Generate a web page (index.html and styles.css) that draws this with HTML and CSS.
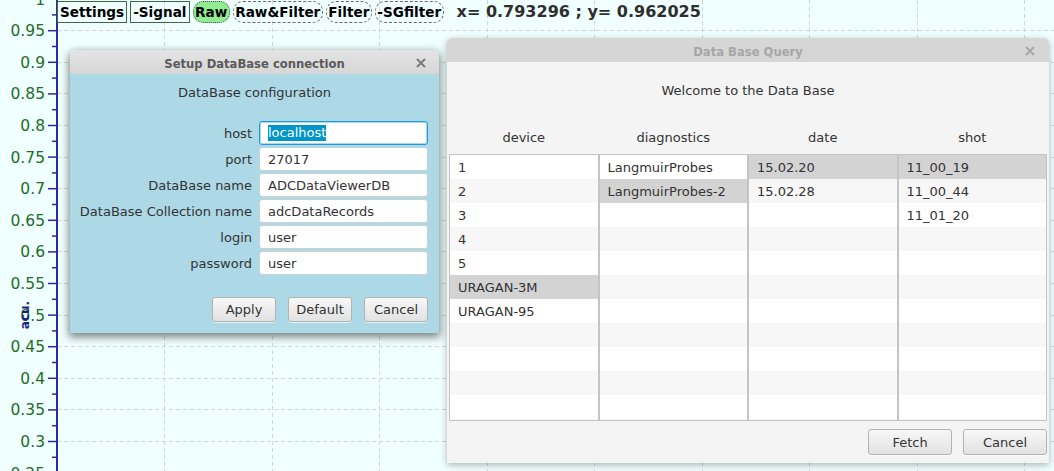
FILE: index.html
```html
<!DOCTYPE html>
<html>
<head>
<meta charset="utf-8">
<title>ADC Data Viewer</title>
<link rel="stylesheet" href="styles.css">
</head>
<body>
<svg class="chart" width="1054" height="471" viewBox="0 0 1054 471">
  <g class="grid">
    <line x1="57" y1="30.5" x2="1054" y2="30.5"/>
    <line x1="57" y1="62.5" x2="1054" y2="62.5"/>
    <line x1="57" y1="93.5" x2="1054" y2="93.5"/>
    <line x1="57" y1="125.5" x2="1054" y2="125.5"/>
    <line x1="57" y1="157.5" x2="1054" y2="157.5"/>
    <line x1="57" y1="188.5" x2="1054" y2="188.5"/>
    <line x1="57" y1="220.5" x2="1054" y2="220.5"/>
    <line x1="57" y1="251.5" x2="1054" y2="251.5"/>
    <line x1="57" y1="283.5" x2="1054" y2="283.5"/>
    <line x1="57" y1="315.5" x2="1054" y2="315.5"/>
    <line x1="57" y1="346.5" x2="1054" y2="346.5"/>
    <line x1="57" y1="378.5" x2="1054" y2="378.5"/>
    <line x1="57" y1="409.5" x2="1054" y2="409.5"/>
    <line x1="57" y1="441.5" x2="1054" y2="441.5"/>
    <line x1="164.5" y1="0" x2="164.5" y2="471"/>
    <line x1="272.5" y1="0" x2="272.5" y2="471"/>
    <line x1="379.5" y1="0" x2="379.5" y2="471"/>
    <line x1="487.5" y1="0" x2="487.5" y2="471"/>
    <line x1="594.5" y1="0" x2="594.5" y2="471"/>
    <line x1="702.5" y1="0" x2="702.5" y2="471"/>
    <line x1="809.5" y1="0" x2="809.5" y2="471"/>
    <line x1="917.5" y1="0" x2="917.5" y2="471"/>
    <line x1="1024.5" y1="0" x2="1024.5" y2="471"/>
  </g>
  <g class="ticks">
    <line x1="48" y1="-0.9" x2="57" y2="-0.9"/>
    <line x1="48" y1="30.7" x2="57" y2="30.7"/>
    <line x1="48" y1="62.3" x2="57" y2="62.3"/>
    <line x1="48" y1="93.9" x2="57" y2="93.9"/>
    <line x1="48" y1="125.5" x2="57" y2="125.5"/>
    <line x1="48" y1="157.1" x2="57" y2="157.1"/>
    <line x1="48" y1="188.7" x2="57" y2="188.7"/>
    <line x1="48" y1="220.3" x2="57" y2="220.3"/>
    <line x1="48" y1="251.9" x2="57" y2="251.9"/>
    <line x1="48" y1="283.5" x2="57" y2="283.5"/>
    <line x1="48" y1="315.1" x2="57" y2="315.1"/>
    <line x1="48" y1="346.7" x2="57" y2="346.7"/>
    <line x1="48" y1="378.3" x2="57" y2="378.3"/>
    <line x1="48" y1="409.9" x2="57" y2="409.9"/>
    <line x1="48" y1="441.5" x2="57" y2="441.5"/>
    <line x1="52" y1="14.9" x2="57" y2="14.9"/>
    <line x1="52" y1="46.5" x2="57" y2="46.5"/>
    <line x1="52" y1="78.1" x2="57" y2="78.1"/>
    <line x1="52" y1="109.7" x2="57" y2="109.7"/>
    <line x1="52" y1="141.3" x2="57" y2="141.3"/>
    <line x1="52" y1="172.9" x2="57" y2="172.9"/>
    <line x1="52" y1="204.5" x2="57" y2="204.5"/>
    <line x1="52" y1="236.1" x2="57" y2="236.1"/>
    <line x1="52" y1="267.7" x2="57" y2="267.7"/>
    <line x1="52" y1="299.3" x2="57" y2="299.3"/>
    <line x1="52" y1="330.9" x2="57" y2="330.9"/>
    <line x1="52" y1="362.5" x2="57" y2="362.5"/>
    <line x1="52" y1="394.1" x2="57" y2="394.1"/>
    <line x1="52" y1="425.7" x2="57" y2="425.7"/>
    <line x1="52" y1="457.3" x2="57" y2="457.3"/>
  </g>
  <line class="axis" x1="57" y1="0" x2="57" y2="471"/>
  <g class="labels">
    <text x="45" y="4.6">1</text>
    <text x="45" y="36.2">0.95</text>
    <text x="45" y="67.8">0.9</text>
    <text x="45" y="99.4">0.85</text>
    <text x="45" y="131">0.8</text>
    <text x="45" y="162.6">0.75</text>
    <text x="45" y="194.2">0.7</text>
    <text x="45" y="225.8">0.65</text>
    <text x="45" y="257.4">0.6</text>
    <text x="45" y="289">0.55</text>
    <text x="45" y="320.6">0.5</text>
    <text x="45" y="352.2">0.45</text>
    <text x="45" y="383.8">0.4</text>
    <text x="45" y="415.4">0.35</text>
    <text x="45" y="447">0.3</text>
    <text x="45" y="478.6">0.25</text>
  </g>
  <text class="axis-title" transform="translate(29 315) rotate(-90)">acu.</text>
</svg>

<div class="toolbar">
  <span class="tb tb-box">Settings</span>
  <span class="tb tb-box">-Signal</span>
  <span class="tb tb-pill tb-on">Raw</span>
  <span class="tb tb-pill">Raw&amp;Filter</span>
  <span class="tb tb-pill">Filter</span>
  <span class="tb tb-pill">-SGfilter</span>
  <span class="coords">x= 0.793296 ; y= 0.962025</span>
</div>

<div class="win win-setup">
  <div class="win-title title-active">Setup DataBase connection
    <svg class="win-close" width="10" height="10" viewBox="0 0 10 10"><path d="M1 1L9 9M9 1L1 9"/></svg>
  </div>
  <div class="setup-body">
    <div class="setup-heading">DataBase configuration</div>
    <div class="form">
      <span class="flabel">host</span><div class="field field-focus"><span class="sel">localhost</span></div>
      <span class="flabel">port</span><div class="field">27017</div>
      <span class="flabel">DataBase name</span><div class="field">ADCDataViewerDB</div>
      <span class="flabel">DataBase Collection name</span><div class="field">adcDataRecords</div>
      <span class="flabel">login</span><div class="field">user</div>
      <span class="flabel">password</span><div class="field">user</div>
    </div>
    <div class="btnrow">
      <button class="btn btn-small">Apply</button>
      <button class="btn btn-small">Default</button>
      <button class="btn btn-small">Cancel</button>
    </div>
  </div>
</div>

<div class="win win-query">
  <div class="win-title title-inactive">Data Base Query
    <svg class="win-close" width="10" height="10" viewBox="0 0 10 10"><path d="M1 1L9 9M9 1L1 9"/></svg>
  </div>
  <div class="query-body">
    <div class="welcome">Welcome to the Data Base</div>
    <div class="qtable">
      <div class="qcol">
        <div class="qhead">device</div>
        <div class="qlist">
          <div class="qitem">1</div>
          <div class="qitem">2</div>
          <div class="qitem">3</div>
          <div class="qitem">4</div>
          <div class="qitem">5</div>
          <div class="qitem qsel">URAGAN-3M</div>
          <div class="qitem">URAGAN-95</div>
        </div>
      </div>
      <div class="qcol">
        <div class="qhead">diagnostics</div>
        <div class="qlist">
          <div class="qitem">LangmuirProbes</div>
          <div class="qitem qsel">LangmuirProbes-2</div>
        </div>
      </div>
      <div class="qcol">
        <div class="qhead">date</div>
        <div class="qlist">
          <div class="qitem qsel">15.02.20</div>
          <div class="qitem">15.02.28</div>
        </div>
      </div>
      <div class="qcol">
        <div class="qhead">shot</div>
        <div class="qlist">
          <div class="qitem qsel">11_00_19</div>
          <div class="qitem">11_00_44</div>
          <div class="qitem">11_01_20</div>
        </div>
      </div>
    </div>
    <div class="qfooter">
      <button class="btn btn-wide">Fetch</button>
      <button class="btn btn-wide">Cancel</button>
    </div>
  </div>
</div>
</body>
</html>
```

FILE: styles.css
```css
* { box-sizing: border-box; }
html, body { margin: 0; padding: 0; }
body {
  width: 1054px;
  height: 471px;
  overflow: hidden;
  position: relative;
  background: #f0ffff;
  font-family: "DejaVu Sans", "Noto Sans", sans-serif;
  color: #333;
}

/* chart canvas */
.chart { position: absolute; left: 0; top: 0; }
.grid line { stroke: #cfd6d6; stroke-width: 1; stroke-dasharray: 4 3; }
.ticks line { stroke: #2b2b9c; stroke-width: 1.5; }
.axis { stroke: #2b2b9c; stroke-width: 2; }
.labels text {
  font-family: "DejaVu Sans", sans-serif;
  font-size: 15.5px;
  fill: #1f6d1f;
  text-anchor: end;
}
.axis-title {
  font-family: "DejaVu Sans", sans-serif;
  font-size: 12px;
  font-weight: bold;
  fill: #1c1c8a;
  text-anchor: middle;
}

/* toolbar */
.toolbar {
  position: relative;
  display: flex;
  align-items: center;
  gap: 3px;
  padding: 1px 0 0 57px;
}
.tb {
  font-weight: bold;
  font-size: 13.6px;
  line-height: 16px;
  color: #000;
  padding: 2px 2px;
  border: 1px solid #3f6a3f;
}
.tb-pill {
  border: 1px dashed #6a6a6a;
  border-radius: 10px;
  padding: 2px 1.5px;
}
.tb-on { background: #90ee90; border-style: dotted; border-color: #4a4a4a; }
.coords {
  font-weight: bold;
  font-size: 16px;
  line-height: 18px;
  color: #2e2e2e;
  margin-left: 10px;
}

/* windows */
.win {
  position: absolute;
  display: flex;
  flex-direction: column;
  border-radius: 5px 5px 0 0;
}
.win-setup {
  left: 70px;
  top: 50px;
  width: 369px;
  height: 283px;
  box-shadow: 0 3px 9px 1px rgba(0, 0, 0, 0.5);
}
.win-query {
  left: 447px;
  top: 38px;
  width: 602px;
  height: 425px;
  box-shadow: 0 2px 7px rgba(0, 0, 0, 0.3);
}
.win-title {
  position: relative;
  height: 24px;
  flex: none;
  display: flex;
  align-items: center;
  justify-content: center;
  padding-top: 3px;
  font-weight: bold;
  font-size: 11.6px;
  border-radius: 5px 5px 0 0;
}
.title-active {
  background: linear-gradient(#e4e4e4, #d6d6d6);
  color: #5a5a5a;
}
.title-inactive {
  background: #d6d6d6;
  color: #a6a6a6;
}
.win-close {
  position: absolute;
  top: 8px;
  right: 13px;
  fill: none;
  stroke-width: 2;
}
.title-active .win-close { stroke: #7a7a7a; }
.title-inactive .win-close { stroke: #a8a8a8; right: 14px; top: 8px; }

/* setup dialog */
.setup-body {
  flex: 1;
  background: #add8e6;
  padding: 11px 11px 11px 0;
  display: flex;
  flex-direction: column;
  font-size: 13px;
}
.setup-heading {
  text-align: center;
  line-height: 16px;
  padding-left: 11px;
}
.form {
  margin-top: 20px;
  display: grid;
  grid-template-columns: 1fr 169px;
  grid-auto-rows: 24px;
  column-gap: 7px;
  row-gap: 2px;
}
.flabel {
  text-align: right;
  line-height: 24px;
  padding-top: 1px;
  color: #333;
  white-space: nowrap;
}
.field {
  background: #fff;
  border: 1px solid #c6d2d6;
  border-radius: 3px;
  padding-left: 8px;
  padding-top: 1px;
  line-height: 21px;
  color: #333;
}
.field-focus {
  border-color: #1e9ad6;
  box-shadow: inset 0 0 0 1px #a8d8ee;
  display: flex;
  align-items: center;
  padding-top: 0;
}
.sel {
  background: #0096c9;
  color: #fff;
  line-height: 16px;
  margin-top: -1px;
}
.btnrow {
  margin-top: 22px;
  display: flex;
  justify-content: flex-end;
  gap: 12px;
}
.btn {
  font-family: "DejaVu Sans", sans-serif;
  font-size: 13px;
  color: #333;
  background: linear-gradient(#f7f7f7, #e2e2e2);
  border: 1px solid #b3b3b3;
  border-radius: 3px;
  padding: 0;
  box-shadow: 0 1px 0 rgba(255,255,255,0.6);
}
.btn-small { width: 64px; height: 25px; }
.btn-wide { width: 84px; height: 26px; }

/* query dialog */
.query-body {
  flex: 1;
  background: #f4f4f4;
  display: flex;
  flex-direction: column;
  font-size: 13px;
}
.welcome {
  padding-top: 21px;
  line-height: 16px;
  text-align: center;
}
.qtable {
  margin-top: 21px;
  display: grid;
  grid-template-columns: repeat(4, 1fr);
  padding: 0 2px;
}
.qhead {
  text-align: center;
  line-height: 16px;
  padding: 10px 0 8px;
}
.qlist {
  height: 267px;
  border: 1px solid #c4c4c4;
  background: repeating-linear-gradient(#ffffff 0 24px, #f7f7f7 24px 48px);
}
.qitem {
  height: 24px;
  line-height: 24px;
  padding-left: 8px;
  padding-top: 1px;
  color: #333;
}
.qsel { background: #d3d3d3; }
.qfooter {
  display: flex;
  justify-content: flex-end;
  gap: 11px;
  padding: 8px 2px;
}
```
